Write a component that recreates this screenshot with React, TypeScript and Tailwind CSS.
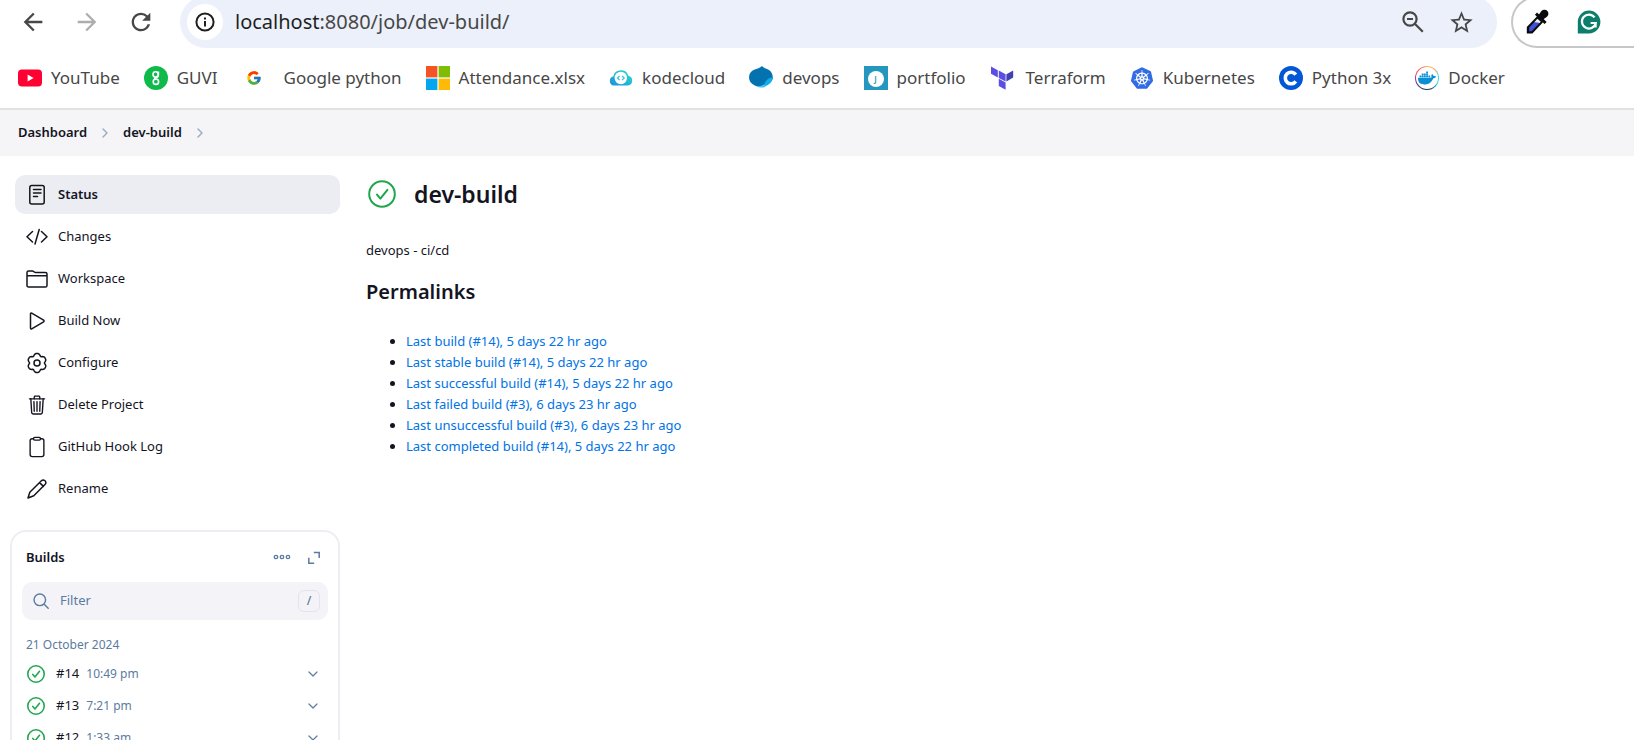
import type { ReactNode } from "react";
import { ChevronDown, ChevronRight } from "lucide-react";
import { FcGoogle } from "react-icons/fc";
import { IoClipboardOutline, IoTrashOutline } from "react-icons/io5";
import { MdArrowBack, MdArrowForward, MdRefresh, MdStarBorder } from "react-icons/md";
import { SiDocker, SiKubernetes } from "react-icons/si";

/* ---------- browser icons ---------- */

function InfoIcon() {
  return (
    <svg viewBox="0 0 20 20" className="size-5" fill="none" stroke="#1f1f1f" strokeWidth="2">
      <circle cx="10" cy="10" r="8.6" />
      <path d="M10 9v5.4M10 5.4v2" />
    </svg>
  );
}

function ZoomOutIcon() {
  return (
    <svg viewBox="0 0 22 22" className="size-[22px]" fill="none" stroke="#474747" strokeWidth="2.2">
      <circle cx="8" cy="8" r="6.6" />
      <path d="M5 8h6M12.8 12.8l8 8" />
    </svg>
  );
}

function EyedropperIcon() {
  return (
    <svg viewBox="0 0 24 26" className="h-[26px] w-6">
      <path d="M12.6 6.8 1.8 18v6.4h5.6L18 13.2z" fill="#0a0a0a" />
      <path d="M12.4 9.8 9 13.4l5.6.6 1.2-1.2z" fill="#e8ecff" />
      <path d="M9 13.4 4.2 18.6v3.6h2.4l8-8.2z" fill="#3f51d8" />
      <path d="M11 4.6 20.6 14" stroke="#0a0a0a" strokeWidth="3" />
      <path d="M13.4 6.8C14.6 5 16 1.2 19 .8c2.6-.3 4.6 1.6 4.4 4.2-.3 3-4 4.2-5.800 6z" fill="#0a0a0a" />
    </svg>
  );
}

function GrammarlyIcon() {
  return (
    <svg viewBox="0 0 24 24" className="size-6">
      <path d="M12 .6A11.4 11.4 0 0 1 12 23.4H.8V12A11.3 11.3 0 0 1 12 .6z" fill="#0b7f6c" />
      <path d="M17.600 7.400A7 7 0 1 0 18.800 13H13.600M18.600 12.600v5" fill="none" stroke="#fff" strokeWidth="2.2" />
    </svg>
  );
}

/* ---------- bookmark icons ---------- */

function YouTubeIcon() {
  return (
    <svg viewBox="0 0 24 24" className="size-6">
      <rect x="0" y="3.600" width="24" height="16.800" rx="4" fill="#ff0033" />
      <path d="M9.600 8.600v6.800l6-3.400z" fill="#fff" />
    </svg>
  );
}

function GuviIcon() {
  return (
    <svg viewBox="0 0 24 24" className="size-6" fill="none" stroke="#fff" strokeWidth="1.600">
      <circle cx="12" cy="12" r="12" fill="#0fba4b" stroke="none" />
      <circle cx="11.600" cy="8.400" r="2.600" />
      <path d="M14.400 5.400v3.400c0 1.800-1 2.700-2.600 2.900-1.400.2-1.500 1.500-.2 1.700" />
      <circle cx="11.900" cy="15.700" r="2.700" />
    </svg>
  );
}

function MicrosoftIcon() {
  return (
    <svg viewBox="0 0 24 24" className="size-6">
      <path d="M0 0h11.400v11.400H0z" fill="#f35325" />
      <path d="M12.600 0H24v11.400H12.600z" fill="#81bc06" />
      <path d="M0 12.600h11.400V24H0z" fill="#05a6f0" />
      <path d="M12.600 12.600H24V24H12.600z" fill="#ffba08" />
    </svg>
  );
}

function KodeCloudIcon() {
  return (
    <svg viewBox="0 0 24 24" className="size-6" fill="none">
      <defs>
        <linearGradient id="kode" x1="0" x2="1" y1="1" y2="0">
          <stop offset="0" stopColor="#1a8fe0" />
          <stop offset="1" stopColor="#2fe0c8" />
        </linearGradient>
      </defs>
      <path d="M5 19.600a4.800 4.800 0 0 1-.6-9.400A7.800 7.800 0 0 1 19.400 9.800 5 5 0 0 1 19 19.600z" fill="url(#kode)" />
      <circle cx="11.800" cy="12" r="6.200" fill="#fff" />
      <path d="m10.600 9.800-2.200 2.200 2.200 2.200M13 9.800l2.200 2.200-2.200 2.200" stroke="#35bddb" strokeWidth="1.200" />
    </svg>
  );
}

function DevopsIcon() {
  return (
    <svg viewBox="0 0 24 24" className="size-6">
      <path d="M13 0c1.600 2.200 4.400 2.400 7 4 3 2 4 5 3.800 9-1 1.400-2.400 1-3.800 2-2.400 1.800-3.400 4.400-5.800 5.200-3 1-5.600.6-8.400-.8C2.200 17.600 0 15 0 11.400 0 7.800 2 5.200 5 3.800 8 2.400 11 2.200 13 0z" fill="#0572b0" />
      <path d="M23.800 11.600c0 4-3.600 7.600-8 8.800-1-1.800 0-4 1.600-5.800 1.800-2 4-3.200 6.400-3z" fill="#12aeea" />
      <path d="M7.600 20c2.800.6 5.400 0 7.600-1.800 2 1.400 1.400 2.800-.6 3.200-2.600.4-5 .4-7-1.400z" fill="#3fc4f5" />
    </svg>
  );
}

function PortfolioIcon() {
  return (
    <span className="flex size-6 items-center justify-center bg-[#2596be] pt-0.5">
      <span className="flex size-4 items-center justify-center rounded-full bg-white text-[8px] leading-none font-semibold text-[#2596be]">J</span>
    </span>
  );
}

function TerraformIcon() {
  return (
    <svg viewBox="0 0 24 24" className="size-6">
      <path d="M1 .4 7.800 4.200v7.400L1 7.800zM8.800 4.400l6.800 3.800v7.400L8.800 12zM8.800 12.800l6.800 3.800v7.200L8.800 20z" fill="#5c4ee5" />
      <path d="M16.400 8.200 23.200 4.400v7.200l-6.800 4z" fill="#4040b2" />
    </svg>
  );
}

function CBadgeIcon() {
  return (
    <svg viewBox="0 0 24 24" className="size-6" fill="none">
      <circle cx="12" cy="12" r="12" fill="#0157d8" />
      <path d="M16.800 8.600a5.800 5.800 0 1 0 0 6.800" stroke="#fff" strokeWidth="3.600" />
    </svg>
  );
}

function DockerIcon() {
  return (
    <span className="flex size-6 items-center justify-center rounded-full bg-[conic-gradient(#ffb64d,#ff9a5c_40deg,#3be0d8_80deg,#2bd5e0_120deg,#1d3557_160deg,#1d3557_200deg,#7a2fa8_250deg,#ff4d5e_300deg,#ff6a5c_340deg,#ffb64d)]">
      <span className="flex size-[22px] items-center justify-center rounded-full bg-white">
        <SiDocker className="size-[18px] text-[#0a8fd6]" />
      </span>
    </span>
  );
}

type Bookmark = { label: string; icon: ReactNode; gap: string };

const bookmarks: Bookmark[] = [
  { label: "YouTube", icon: <YouTubeIcon />, gap: "gap-[9px]" },
  { label: "GUVI", icon: <GuviIcon />, gap: "gap-[9px]" },
  { label: "Google python", icon: <FcGoogle className="size-4" />, gap: "gap-[18px]" },
  { label: "Attendance.xlsx", icon: <MicrosoftIcon />, gap: "gap-[9px]" },
  { label: "kodecloud", icon: <KodeCloudIcon />, gap: "gap-[9px]" },
  { label: "devops", icon: <DevopsIcon />, gap: "gap-[9px]" },
  { label: "portfolio", icon: <PortfolioIcon />, gap: "gap-[9px]" },
  { label: "Terraform", icon: <TerraformIcon />, gap: "gap-3" },
  { label: "Kubernetes", icon: <SiKubernetes className="size-[22px] text-[#326ce5]" />, gap: "gap-[9px]" },
  { label: "Python 3x", icon: <CBadgeIcon />, gap: "gap-[9px]" },
  { label: "Docker", icon: <DockerIcon />, gap: "gap-[9px]" },
];

function BrowserBar() {
  return (
    <header className="shrink-0 border-b-2 border-[#e1e1e2] bg-white">
      <div className="-mt-1 flex h-[52px] items-center">
        <nav aria-label="History" className="flex w-[180px] shrink-0 items-center gap-[26px] pl-[19px] text-[#474747]">
          <button type="button" aria-label="Back"><MdArrowBack className="size-7" /></button>
          <button type="button" aria-label="Forward" className="text-[#adadad]"><MdArrowForward className="size-7" /></button>
          <button type="button" aria-label="Reload"><MdRefresh className="size-7" /></button>
        </nav>
        <div className="flex h-full min-w-0 flex-1 items-center rounded-full bg-[#ecf0fa] pr-[22px] pl-[7px]">
          <button type="button" aria-label="Site information" className="flex size-9 shrink-0 items-center justify-center rounded-full bg-white">
            <InfoIcon />
          </button>
          <a href="#address" className="ml-3 flex-1 text-[20px] leading-7 text-[#474747]">
            <span className="text-[#1f1f1f]">localhost</span>:8080/job/dev-build/
          </a>
          <button type="button" aria-label="Zoom out" className="mr-6"><ZoomOutIcon /></button>
          <button type="button" aria-label="Bookmark this page"><MdStarBorder className="size-[27px] text-[#474747]" /></button>
        </div>
        <div className="ml-3.5 flex h-full w-[123px] shrink-0 items-center gap-7 rounded-l-full border-2 border-r-0 border-[#c7c7c7] pl-3">
          <button type="button" aria-label="Color picker"><EyedropperIcon /></button>
          <button type="button" aria-label="Grammarly"><GrammarlyIcon /></button>
        </div>
      </div>
      <nav aria-label="Bookmarks" className="flex h-[60px] items-center gap-6 pl-[18px]">
        {bookmarks.map((b) => (
          <a key={b.label} href="#bookmark" className={`flex items-center text-[17px] leading-6 whitespace-nowrap text-[#474747] ${b.gap}`}>
            <span className="flex w-6 justify-center">{b.icon}</span>
            {b.label}
          </a>
        ))}
      </nav>
    </header>
  );
}

/* ---------- sidebar ---------- */

function LineIcon({ children }: { children: ReactNode }) {
  return (
    <svg viewBox="0 0 22 22" className="size-[22px]" fill="none" stroke="currentColor" strokeWidth="1.500" strokeLinecap="round" strokeLinejoin="round">
      {children}
    </svg>
  );
}

/* Six-lobed outline of the settings gear, centred in a 22-unit box. */
const gearPoints = Array.from({ length: 72 }, (_, i) => {
  const a = (i * Math.PI) / 36;
  const r = 8.7 + Math.cos(6 * a) + 0.25 * Math.cos(12 * a + Math.PI);
  return `${(11 + r * Math.sin(a)).toFixed(2)},${(11 - r * Math.cos(a)).toFixed(2)}`;
}).join(" ");

type Task = { label: string; icon: ReactNode };

const tasks: Task[] = [
  {
    label: "Status",
    icon: (
      <LineIcon>
        <rect x="3.800" y="1.500" width="14.400" height="18.500" rx="2" />
        <path d="M7.500 5.500h7.500M7.500 9h7.500M7.500 12.500h4" />
      </LineIcon>
    ),
  },
  { label: "Changes", icon: <LineIcon><path d="M6.500 5.500 1 10.800l5.500 5.200M15.500 5.500l5.500 5.300-5.500 5.200M13.200 3.500 9 18" /></LineIcon> },
  {
    label: "Workspace",
    icon: (
      <LineIcon>
        <path d="M1 7.500V4.600C1 3.600 1.700 3 2.600 3h3.800c1.400 0 1.800 1.500 3.200 1.500h9.800c1 0 1.600.6 1.600 1.600v11.300c0 1-.6 1.600-1.600 1.600H2.600c-1 0-1.600-.6-1.600-1.600V7.800h20" />
      </LineIcon>
    ),
  },
  { label: "Build Now", icon: <LineIcon><path d="M4.500 4v14c0 .8.6 1.100 1.200.8l11.900-7c.6-.4.6-1.200 0-1.600l-11.900-7c-.6-.3-1.200 0-1.200.8z" /></LineIcon> },
  {
    label: "Configure",
    icon: (
      <LineIcon>
        <polygon points={gearPoints} />
        <circle cx="11" cy="11" r="3" />
      </LineIcon>
    ),
  },
  { label: "Delete Project", icon: <IoTrashOutline className="size-[22px]" /> },
  { label: "GitHub Hook Log", icon: <IoClipboardOutline className="size-[22px]" /> },
  {
    label: "Rename",
    icon: (
      <LineIcon>
        <path d="m2 20 1.800-5.800L15.400 2.800c1-1 2.500-1 3.600 0s1.200 2.500.2 3.500L7.800 17.800zM13.600 4.600l3.800 3.800" />
      </LineIcon>
    ),
  },
];

function CheckCircle({ className, stroke }: { className: string; stroke: number }) {
  return (
    <svg viewBox="0 0 28 28" className={className} fill="none" stroke="#1ea64b" strokeWidth={stroke} strokeLinecap="round" strokeLinejoin="round">
      <circle cx="14" cy="14" r="12.800" />
      <path d="m9 14.600 3.400 4L19.400 9.800" />
    </svg>
  );
}

const builds = [
  { id: "#14", time: "10:49 pm" },
  { id: "#13", time: "7:21 pm" },
  { id: "#12", time: "1:33 am" },
];

function Builds() {
  return (
    <section className="-ml-[5px] mt-[22px] rounded-2xl border-2 border-[#ededf4] px-2.5 pt-2.5">
      <div className="flex h-8 items-center pr-1 pl-1">
        <h2 className="flex-1 text-[13px] font-semibold">Builds</h2>
        <button type="button" aria-label="More actions" className="mr-[17px] text-[#5b7ba0]">
          <svg viewBox="0 0 18 18" className="size-[18px]" fill="none" stroke="currentColor" strokeWidth="1.300">
            <circle cx="3" cy="8" r="1.700" />
            <circle cx="9" cy="8" r="1.700" />
            <circle cx="15" cy="8" r="1.700" />
          </svg>
        </button>
        <button type="button" aria-label="Expand" className="mr-1 text-[#5b7ba0]">
          <svg viewBox="0 0 12 14" className="h-3.5 w-3" fill="none" stroke="currentColor" strokeWidth="1.500">
            <path d="M5.800 1.600h5.400V7M.8 6.800v5.400h5.400" />
          </svg>
        </button>
      </div>
      <label className="mt-2 flex h-[38px] items-center rounded-[10px] bg-[#f3f3f8] pr-2 pl-[11px] text-[#5b7ba0]">
        <svg viewBox="0 0 16 16" className="size-4" fill="none" stroke="currentColor" strokeWidth="1.400" strokeLinecap="round">
          <circle cx="6.800" cy="6.800" r="5.800" />
          <path d="m11.200 11.200 4 4" />
        </svg>
        <input type="search" aria-label="Filter" placeholder="Filter" className="ml-[11px] min-w-0 flex-1 bg-transparent text-[13px] outline-none placeholder:text-[#5b7ba0]" />
        <kbd className="flex size-[22px] items-center justify-center rounded-md border border-[#e3e3ec] font-['Noto_Sans','Open_Sans',sans-serif] text-[12px] font-medium">/</kbd>
      </label>
      <h3 className="mt-4 pl-1 text-[12px] leading-[18px] text-[#5b7ba0]">21 October 2024</h3>
      <ul className="mt-1">
        {builds.map((b) => (
          <li key={b.id} className="flex h-8 items-center pr-[7px] pl-[5px] text-[13px]">
            <CheckCircle className="mr-[11px] size-[18px]" stroke={2.4} />
            <a href="#build" className="flex flex-1 items-baseline gap-[7px]">
              {b.id}
              <span className="text-[12px] text-[#5b7ba0]">{b.time}</span>
            </a>
            <button type="button" aria-label={`Actions for build ${b.id}`}>
              <ChevronDown className="size-4 text-[#5b7ba0]" strokeWidth={1.8} />
            </button>
          </li>
        ))}
      </ul>
    </section>
  );
}

/* ---------- main content ---------- */

const permalinks = [
  "Last build (#14), 5 days 22 hr ago",
  "Last stable build (#14), 5 days 22 hr ago",
  "Last successful build (#14), 5 days 22 hr ago",
  "Last failed build (#3), 6 days 23 hr ago",
  "Last unsuccessful build (#3), 6 days 23 hr ago",
  "Last completed build (#14), 5 days 22 hr ago",
];

export default function App() {
  return (
    <div className="flex h-screen flex-col overflow-hidden bg-white font-['Noto_Sans','Open_Sans',sans-serif] text-[#14141f]">
      <BrowserBar />
      <nav aria-label="Breadcrumbs" className="flex h-[46px] shrink-0 items-center gap-2.5 bg-[#f5f5f7] pl-[18px] text-[13px] font-semibold">
        <a href="#dashboard">Dashboard</a>
        <ChevronRight className="size-4 text-[#98a9c4]" strokeWidth={2} />
        <a href="#job">dev-build</a>
        <ChevronRight className="size-4 text-[#98a9c4]" strokeWidth={2} />
      </nav>
      <div className="flex min-h-0 flex-1">
        <aside className="w-[340px] shrink-0 pt-[19px] pl-[15px]">
          <nav aria-label="Job tasks" className="flex flex-col gap-[3px]">
            {tasks.map((t, i) => (
              <a
                key={t.label}
                href="#task"
                className={`flex h-[39px] items-center gap-2.5 rounded-[10px] pl-[11px] text-[13px] ${i === 0 ? "bg-[#ecedf3] font-semibold" : ""}`}
              >
                <span className="flex w-[22px] justify-center">{t.icon}</span>
                {t.label}
              </a>
            ))}
          </nav>
          <Builds />
        </aside>
        <main className="min-w-0 flex-1 pt-5 pl-[26px]">
          <div className="flex h-9 items-center gap-[18px] pl-0.5">
            <CheckCircle className="size-7" stroke={2} />
            <h1 className="text-[23px] font-semibold">dev-build</h1>
          </div>
          <p className="mt-7 text-[13px] leading-5">devops - ci/cd</p>
          <h2 className="mt-4 text-[20px] leading-8 font-semibold">Permalinks</h2>
          <ul className="mt-[23px] list-disc pl-10 text-[13px] leading-[21px]">
            {permalinks.map((p) => (
              <li key={p}>
                <a href="#permalink" className="text-[#0073e6]">{p}</a>
              </li>
            ))}
          </ul>
        </main>
      </div>
    </div>
  );
}
